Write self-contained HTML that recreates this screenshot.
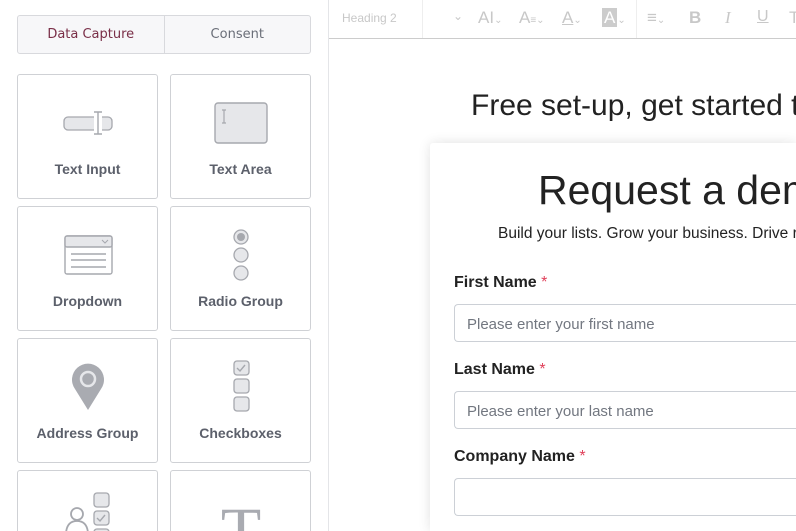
<!DOCTYPE html>
<html style="width:796px;height:531px;overflow:hidden"><head><style>
*{box-sizing:border-box;margin:0;padding:0}
body{width:796px;height:531px;overflow:hidden;background:#fff;position:relative;font-family:"Liberation Sans",sans-serif}
.a{position:absolute}
.left{left:0;top:0;width:329px;height:531px;background:#fff;border-right:1px solid #e4e5e8}
.tabs{left:17px;top:15px;width:294px;height:39px;border:1px solid #d8d9dd;border-radius:3px;background:#f7f7f9;display:flex;font-family:"DejaVu Sans",sans-serif;font-size:13px}
.tabs div{flex:1;text-align:center;line-height:37px;color:#6a6e78}
.tabs div:first-child{color:#7a2f48;border-right:1px solid #d8d9dd}
.tile{width:141px;height:125px;border:1px solid #cfd1d5;border-radius:3px;background:#fff;overflow:hidden}
.tile.b{height:61px;border-bottom:none;border-radius:3px 3px 0 0}
.tile .l{position:absolute;left:0;right:0;top:86px;text-align:center;font-family:"Liberation Sans",sans-serif;font-weight:bold;font-size:14px;color:#5c606b}
.tile svg{position:absolute;left:0;top:0}
.tb{left:329px;top:0;width:467px;height:39px;border-bottom:1px solid #ccc;background:#fff;overflow:hidden}
.ic{position:absolute;top:8px;font-size:17px;color:#c8c8c8;white-space:nowrap}
.ic small{font-size:10px}
.card{left:430px;top:143px;width:366px;height:388px;background:#fff;box-shadow:0 0 12px rgba(0,0,0,.12);border-radius:3px 0 0 0}
.lab{font-weight:bold;font-size:16px;color:#222}
.lab span{color:#e0405a;font-weight:normal}
.inp{left:454px;width:342px;height:38px;border:1px solid #ccd0d6;border-right:none;border-radius:4px 0 0 4px;font-size:15px;color:#727780;padding:11px 12px;white-space:nowrap;overflow:hidden}
.clip{position:absolute;left:0;top:0;width:796px;height:531px;overflow:hidden}
.nw{white-space:nowrap;overflow:hidden}
</style></head><body><div class="clip">
<div class="a left"></div>
<div class="a tabs"><div>Data Capture</div><div>Consent</div></div>

<div class="a tile" style="left:17px;top:74px"><svg width="141" height="80"><rect x="46" y="42" width="48" height="13" rx="4" fill="#e6e7ea" stroke="#a6a8ae" stroke-width="1.3"/><rect x="76" y="40" width="8" height="17" fill="#fff"/><path d="M80 37v22M76 37h8M76 59h8" stroke="#a6a8ae" stroke-width="1.4" fill="none"/></svg><div class="l">Text Input</div></div>
<div class="a tile" style="left:170px;top:74px"><svg width="141" height="80"><rect x="44" y="28" width="52" height="40" rx="3" fill="#e6e7ea" stroke="#a6a8ae" stroke-width="1.4"/><path d="M53 35v13M51 35h4M51 48h4" stroke="#a6a8ae" stroke-width="1.2"/></svg><div class="l">Text Area</div></div>

<div class="a tile" style="left:17px;top:206px"><svg width="141" height="80"><rect x="47" y="29" width="47" height="38" rx="2" fill="#fff" stroke="#a6a8ae" stroke-width="1.4"/><rect x="47" y="29" width="47" height="11" rx="2" fill="#e6e7ea" stroke="#a6a8ae" stroke-width="1.4"/><path d="M84 33l3 3 3-3" stroke="#a6a8ae" fill="none"/><path d="M53 47h35M53 53h35M53 60h35" stroke="#a6a8ae" stroke-width="1.4"/></svg><div class="l">Dropdown</div></div>
<div class="a tile" style="left:170px;top:206px"><svg width="141" height="80"><circle cx="70" cy="30" r="7" fill="#e6e7ea" stroke="#a6a8ae" stroke-width="1.3"/><circle cx="70" cy="30" r="4" fill="#a6a8ae"/><circle cx="70" cy="48" r="7" fill="#e6e7ea" stroke="#a6a8ae" stroke-width="1.3"/><circle cx="70" cy="66" r="7" fill="#e6e7ea" stroke="#a6a8ae" stroke-width="1.3"/></svg><div class="l">Radio Group</div></div>

<div class="a tile" style="left:17px;top:338px"><svg width="141" height="80"><path d="M70 71 L57 50 A16 16 0 1 1 83 50 Z" fill="#a9abb1"/><circle cx="70" cy="40" r="7" fill="none" stroke="#e6e7ea" stroke-width="2.5"/></svg><div class="l">Address Group</div></div>
<div class="a tile" style="left:170px;top:338px"><svg width="141" height="80"><rect x="63" y="22" width="15" height="14" rx="3" fill="#e6e7ea" stroke="#a6a8ae" stroke-width="1.3"/><path d="M66 29l3 3 5-6" stroke="#a6a8ae" fill="none" stroke-width="1.4"/><rect x="63" y="40" width="15" height="14" rx="3" fill="#e6e7ea" stroke="#a6a8ae" stroke-width="1.3"/><rect x="63" y="58" width="15" height="14" rx="3" fill="#e6e7ea" stroke="#a6a8ae" stroke-width="1.3"/></svg><div class="l">Checkboxes</div></div>

<div class="a tile b" style="left:17px;top:470px"><svg width="141" height="61"><rect x="76" y="22" width="15" height="14" rx="3" fill="#e6e7ea" stroke="#a6a8ae" stroke-width="1.3"/><rect x="76" y="40" width="15" height="14" rx="3" fill="#e6e7ea" stroke="#a6a8ae" stroke-width="1.3"/><path d="M79 47l3 3 5-6" stroke="#a6a8ae" fill="none" stroke-width="1.4"/><rect x="76" y="58" width="15" height="14" rx="3" fill="#e6e7ea" stroke="#a6a8ae" stroke-width="1.3"/><circle cx="59" cy="43" r="6" fill="none" stroke="#a6a8ae" stroke-width="1.8"/><path d="M48 62 Q49 50 59 50 Q69 50 70 62" fill="none" stroke="#a6a8ae" stroke-width="1.8"/></svg></div>
<div class="a tile b" style="left:170px;top:470px"><svg width="141" height="61"><text x="70" y="82" text-anchor="middle" font-family="Liberation Serif,serif" font-size="66" fill="#a9abb1">T</text></svg></div>

<div class="a tb">
<div class="a" style="left:13px;top:11px;font-size:12px;color:#c8c8c8">Heading 2</div>
<div class="a" style="left:124px;top:9px;font-size:12px;color:#c8c8c8">⌄</div>
<div class="a" style="left:93px;top:0;width:1px;height:38px;background:#eee"></div>
<div class="ic" style="left:149px">AI<small>⌄</small></div>
<div class="ic" style="left:190px">A<small>≡⌄</small></div>
<div class="ic" style="left:233px"><u>A</u><small>⌄</small></div>
<div class="ic" style="left:273px"><span style="background:#ccc;color:#fff;padding:0 2px">A</span><small>⌄</small></div>
<div class="a" style="left:307px;top:0;width:1px;height:38px;background:#eee"></div>
<div class="ic" style="left:318px">≡<small>⌄</small></div>
<div class="ic" style="left:360px;font-weight:bold">B</div>
<div class="ic" style="left:396px;font-style:italic;font-family:'Liberation Serif',serif">I</div>
<div class="ic" style="left:428px;text-decoration:underline;font-size:16px">U</div>
<div class="ic" style="left:460px">T</div>
</div>

<div class="a nw" style="left:471px;top:89px;width:325px;font-size:30px;color:#222">Free set-up, get started today</div>
<div class="a card"></div>
<div class="a nw" style="left:538px;top:167px;width:258px;font-size:41px;color:#222">Request a demo</div>
<div class="a nw" style="left:498px;top:225px;width:298px;font-size:15.5px;color:#222">Build your lists. Grow your business. Drive revenue.</div>
<div class="a lab" style="left:454px;top:274px">First Name <span>*</span></div>
<div class="a inp" style="top:304px">Please enter your first name</div>
<div class="a lab" style="left:454px;top:361px">Last Name <span>*</span></div>
<div class="a inp" style="top:391px">Please enter your last name</div>
<div class="a lab" style="left:454px;top:448px">Company Name <span>*</span></div>
<div class="a inp" style="top:478px"></div>
</div></body></html>
